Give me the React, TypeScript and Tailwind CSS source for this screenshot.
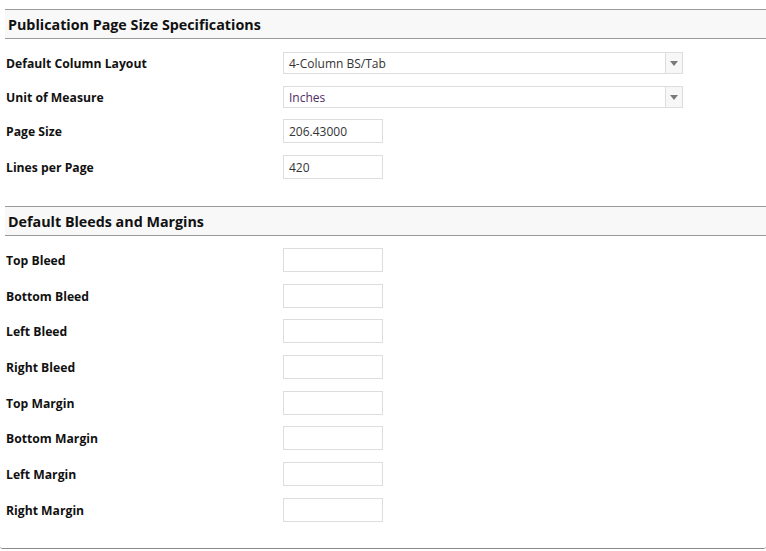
import React from 'react';

const font = { fontFamily: '"Open Sans", "Noto Sans", sans-serif' };

function SectionHeader({ title }: { title: string }) {
  return (
    <div className="ml-[5px] flex h-[30px] items-center border-y border-[#9a9a9a] bg-[#f8f8f8] pt-[2px] pl-[3px] text-[14.3px] font-bold text-[#111]">
      {title}
    </div>
  );
}

function Select({ value, tone }: { value: string; tone: string }) {
  return (
    <div className="flex h-[22px] w-[400px] border border-[#dddddd] bg-white">
      <div className={`flex flex-1 items-center pt-[1px] pl-[5px] text-[12px] ${tone}`}>{value}</div>
      <div className="flex w-[17px] items-center justify-center border-l border-[#dddddd] bg-[#f7f7f7]">
        <svg width="8" height="5" viewBox="0 0 8 5">
          <path d="M0 0h8L4 5z" fill="#7a7a7a" />
        </svg>
      </div>
    </div>
  );
}

function TextBox({ value }: { value?: string }) {
  return (
    <div className="flex h-[24px] w-[100px] items-center border border-[#dddddd] bg-white pt-[1px] pl-[5px] text-[12px] text-[#333]">
      {value}
    </div>
  );
}

function Row({ label, children }: { label: string; children: React.ReactNode }) {
  return (
    <div className="flex items-center">
      <div className="w-[283px] shrink-0 pt-[2px] pl-[6px] text-[12.2px] font-bold text-[#111]">{label}</div>
      {children}
    </div>
  );
}

const bleeds = [
  'Top Bleed',
  'Bottom Bleed',
  'Left Bleed',
  'Right Bleed',
  'Top Margin',
  'Bottom Margin',
  'Left Margin',
  'Right Margin',
];

export default function App() {
  return (
    <div className="h-[551px] w-[766px] bg-white" style={font}>
      <div className="rounded-b-[3px] border-b border-[#8a8a8a] pt-[9px] pb-[26px]">
        <SectionHeader title="Publication Page Size Specifications" />

        <div className="mt-[13px] flex flex-col">
          <Row label="Default Column Layout">
            <Select value="4-Column BS/Tab" tone="text-[#333]" />
          </Row>
          <div className="mt-[12px]">
            <Row label="Unit of Measure">
              <Select value="Inches" tone="text-[#4f2a63]" />
            </Row>
          </div>
          <div className="mt-[11px]">
            <Row label="Page Size">
              <TextBox value="206.43000" />
            </Row>
          </div>
          <div className="mt-[12px]">
            <Row label="Lines per Page">
              <TextBox value="420" />
            </Row>
          </div>
        </div>

        <div className="mt-[27px]">
          <SectionHeader title="Default Bleeds and Margins" />
        </div>

        <div className="mt-[12px] flex flex-col gap-[11.7px]">
          {bleeds.map((b) => (
            <Row key={b} label={b}>
              <TextBox />
            </Row>
          ))}
        </div>
      </div>
    </div>
  );
}
